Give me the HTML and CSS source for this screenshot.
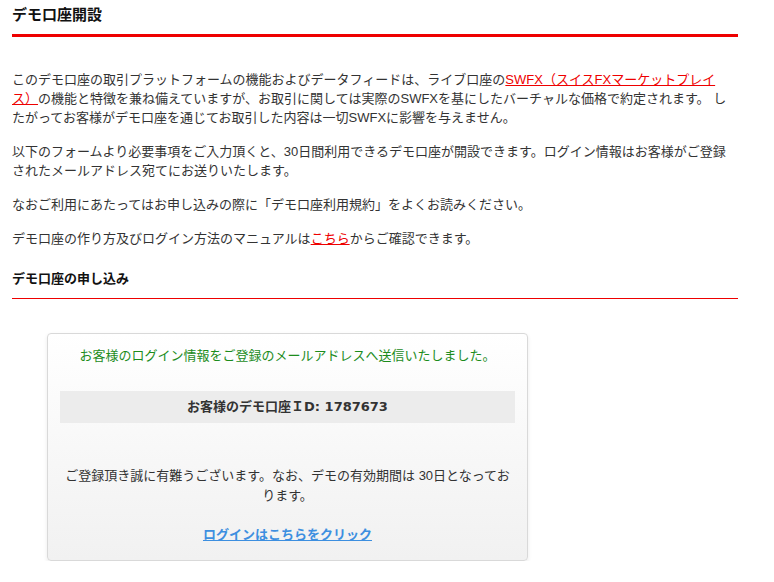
FILE: index.html
```html
<!doctype html>
<html lang="ja">
    <head>
        <meta charset="utf-8">
        <link rel="stylesheet" href="styles.css">
    </head>
    <body>
        <div class="content">
            <h2 class="title">デモ口座開設</h2>
            <div class="intro">
                <p>このデモ口座の取引プラットフォームの機能およびデータフィードは、ライブ口座の<a href="#" class="red">SWFX（スイスFXマーケットプレイ<wbr>ス）</a>の機能と特徴を兼ね備えていますが、お取引に関しては実際のSWFXを基にしたバーチャルな価格で約定されます。 したがってお客様がデモ口座を通じてお取引した内容は一切SWFXに影響を与えません。</p>
                <p>以下のフォームより必要事項をご入力頂くと、30日間利用できるデモ口座が開設できます。ログイン情報はお客様がご登録されたメールアドレス宛てにお送りいたします。</p>
                <p>なおご利用にあたってはお申し込みの際に「デモ口座利用規約」をよくお読みください。</p>
                <p>デモ口座の作り方及びログイン方法のマニュアルは<a href="#" class="red">こちら</a>からご確認できます。</p>
            </div>
            <h3 class="subtitle">デモ口座の申し込み</h3>
            <div class="result">
                <p class="sent">お客様のログイン情報をご登録のメールアドレスへ送信いたしました。</p>
                <div class="idbar">お客様のデモ口座ＩD: 1787673</div>
                <p class="thanks">ご登録頂き誠に有難うございます。なお、デモの有効期間は 30日となっております。</p>
                <p class="login"><a href="#">ログインはこちらをクリック</a></p>
            </div>
        </div>
    </body>
</html>
```

FILE: styles.css
```css
*{
    margin: 0;
    padding: 0;
    box-sizing: border-box;
}
body{
    font-family: "Liberation Sans", "Noto Sans CJK JP", sans-serif;
    font-size: 13px;
    color: #333;
    background: #fff;
}
a{
    text-decoration: underline;
}
.content{
    width: 726px;
    margin-left: 12px;
}
.title{
    margin-top: 5px;
    font-size: 15px;
    line-height: 20px;
    color: #111;
    padding-bottom: 9px;
    border-bottom: 3px solid #e00;
}
.intro{
    margin-top: 33px;
}
.intro p{
    line-height: 19px;
    margin-bottom: 15px;
}
.red{
    color: #e00;
}
.subtitle{
    margin-top: 21px;
    font-size: 13px;
    line-height: 19px;
    color: #111;
    padding-bottom: 10px;
    border-bottom: 1px solid #e00;
}
.result{
    width: 481px;
    margin: 34px 0 0 35px;
    padding: 12px 12px 15px;
    border: 1px solid #d9d9d9;
    border-radius: 4px;
    background: linear-gradient(#fff, #f1f1f1);
    box-shadow: 0 2px 4px rgba(0,0,0,0.08);
    text-align: center;
}
.sent{
    line-height: 19px;
    color: #1c8c1c;
    margin-bottom: 26px;
}
.idbar{
    height: 32px;
    line-height: 32px;
    background: #ececec;
    font-family: "DejaVu Sans", "Noto Sans CJK JP", sans-serif;
    font-weight: bold;
    color: #333;
}
.thanks{
    margin-top: 43px;
    line-height: 20px;
}
.login{
    margin-top: 19px;
    line-height: 20px;
}
.login a{
    color: #3d8fe0;
    font-weight: bold;
}
```
